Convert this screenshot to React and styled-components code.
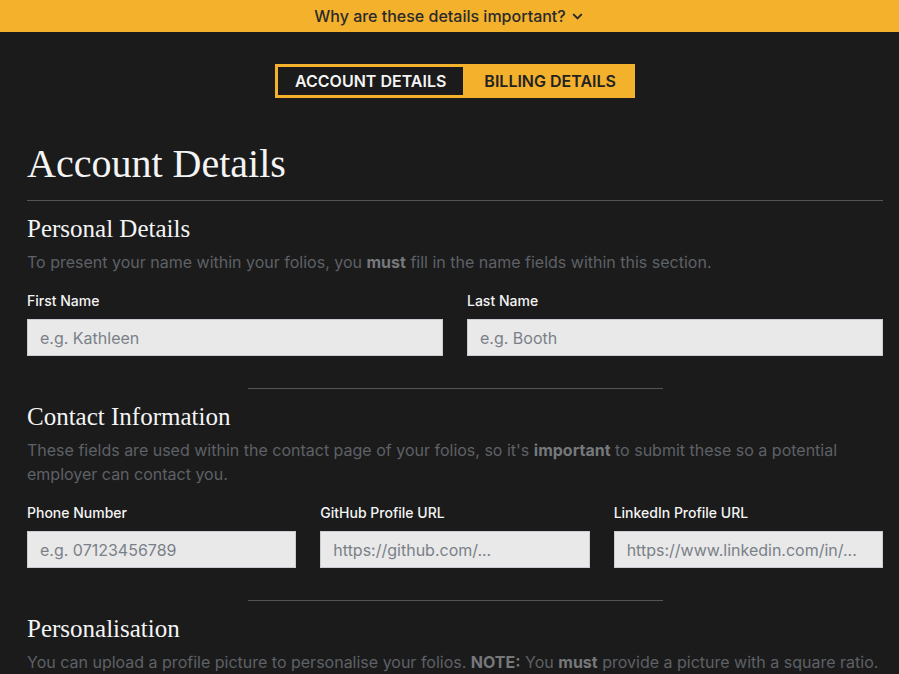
import React from 'react'
import styled, { createGlobalStyle } from 'styled-components'

const GlobalStyle = createGlobalStyle`
    body{
        margin: 0;
        background: #1b1b1b;
        font-family: Inter, "Noto Sans", sans-serif;
        color: #f2f2f2;
    }
    *{ box-sizing: border-box; }
`;

const fields = {
    contact: [
        { label: 'Phone Number', placeholder: 'e.g. 07123456789' },
        { label: 'GitHub Profile URL', placeholder: 'https://github.com/...' },
        { label: 'LinkedIn Profile URL', placeholder: 'https://www.linkedin.com/in/...' },
    ],
}

function App(){
    return(
        <>
            <GlobalStyle />
            <Banner>
                Why are these details important?
                <svg width="15" height="15" viewBox="0 0 24 24" fill="none" stroke="#2a2a2a" strokeWidth="3.2" strokeLinecap="round" strokeLinejoin="round">
                    <path d="M6 9l6 6 6-6" />
                </svg>
            </Banner>
            <Page>
                <TabsRow>
                    <Tabs>
                        <Tab active>Account Details</Tab>
                        <Tab>Billing Details</Tab>
                    </Tabs>
                </TabsRow>
                <Title>Account Details</Title>
                <Rule />
                <Section>
                    <Heading>Personal Details</Heading>
                    <Desc>To present your name within your folios, you <b>must</b> fill in the name fields within this section.</Desc>
                    <Grid cols={2}>
                        <Field>
                            <Label>First Name</Label>
                            <Input placeholder="e.g. Kathleen" />
                        </Field>
                        <Field>
                            <Label>Last Name</Label>
                            <Input placeholder="e.g. Booth" />
                        </Field>
                    </Grid>
                </Section>
                <ShortRule />
                <Section>
                    <Heading>Contact Information</Heading>
                    <Desc>These fields are used within the contact page of your folios, so it's <b>important</b> to submit these so a potential employer can contact you.</Desc>
                    <Grid cols={3}>
                        {fields.contact.map((f) => (
                            <Field key={f.label}>
                                <Label>{f.label}</Label>
                                <Input placeholder={f.placeholder} />
                            </Field>
                        ))}
                    </Grid>
                </Section>
                <ShortRule />
                <Section>
                    <Heading>Personalisation</Heading>
                    <Desc>You can upload a profile picture to personalise your folios. <b>NOTE:</b> You <b>must</b> provide a picture with a square ratio.</Desc>
                </Section>
            </Page>
        </>
    )
}

const Banner = styled.div`
    height: 32px;
    background: #f3b12c;
    color: #2a2a2a;
    font-size: 16px;
    font-weight: 500;
    display: flex;
    align-items: center;
    justify-content: center;
    gap: 4px;
`;

const Page = styled.div`
    padding: 32px 16px 0 27px;
`;

const TabsRow = styled.div`
    display: flex;
    justify-content: center;
`;

const Tabs = styled.div`
    display: flex;
    border: 3px solid #f3b12c;
    background: #f3b12c;
`;

const Tab = styled.div`
    height: 28px;
    display: flex;
    align-items: center;
    white-space: nowrap;
    padding: ${p => p.active ? '0 17px' : '0 16px 0 21px'};
    font-size: 16px;
    font-weight: 600;
    text-transform: uppercase;
    background: ${p => p.active ? '#1b1b1b' : '#f3b12c'};
    color: ${p => p.active ? '#f4f4f4' : '#222'};
`;

const Title = styled.h1`
    font-family: "Liberation Serif", serif;
    font-weight: 400;
    font-size: 40px;
    line-height: 44px;
    margin: 44px 0 0;
    color: #f4f4f4;
`;

const Rule = styled.hr`
    border: none;
    border-top: 1px solid #555;
    margin: 14px 0 0;
`;

const ShortRule = styled.hr`
    border: none;
    border-top: 1px solid #555;
    width: 415px;
    margin: 32px auto 0;
`;

const Section = styled.div`
    padding-top: 13px;
`;

const Heading = styled.h2`
    font-family: "Liberation Serif", serif;
    font-weight: 400;
    font-size: 25px;
    line-height: 30px;
    margin: 0;
    color: #f4f4f4;
`;

const Desc = styled.p`
    margin: 6px 0 0;
    font-size: 16px;
    line-height: 24px;
    color: #5e6166;
    b{
        font-weight: 700;
        color: #76787c;
    }
`;

const Grid = styled.div`
    display: grid;
    grid-template-columns: repeat(${p => p.cols}, minmax(0, 1fr));
    gap: 24px;
    margin-top: 18px;
`;

const Field = styled.div`
    display: flex;
    flex-direction: column;
    min-width: 0;
`;

const Label = styled.label`
    font-size: 14px;
    font-weight: 500;
    color: #f4f4f4;
    line-height: 18px;
    margin-bottom: 9px;
`;

const Input = styled.input`
    width: 100%;
    min-width: 0;
    height: 37px;
    background: #e9e9e9;
    border: 1px solid #c9ccd2;
    padding: 0 12px;
    font-family: Inter, sans-serif;
    font-size: 16px;
    outline: none;
    &::placeholder{
        color: #7a8088;
    }
`;

export default App
